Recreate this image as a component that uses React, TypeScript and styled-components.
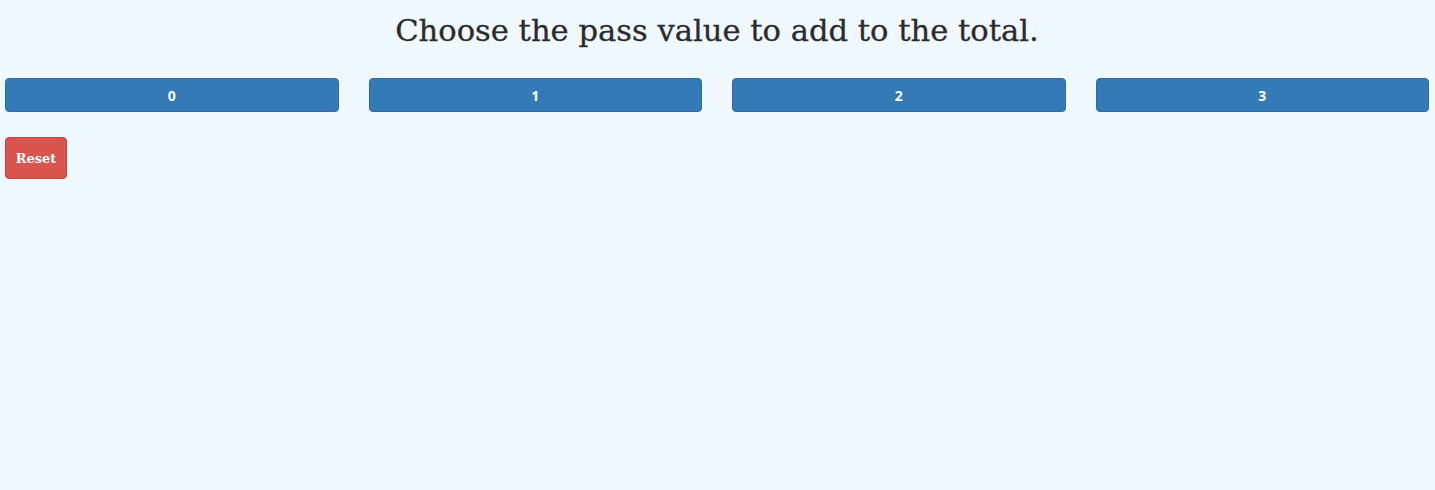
import React from 'react'
import styled, { createGlobalStyle } from 'styled-components'

const GlobalStyle = createGlobalStyle`
  html, body {
    margin: 0;
    background: #f0f8ff;
  }
`

const Page = styled.div`
  padding: 0 6px 0 5px;
`

const Title = styled.h2`
  margin: 0;
  padding-top: 13px;
  height: 78px;
  box-sizing: border-box;
  text-align: center;
  font-family: "DejaVu Serif", serif;
  font-size: 30.6px;
  font-weight: normal;
  color: #2b2b2b;
  -webkit-text-stroke: 0.3px #2b2b2b;
`

const Choices = styled.div`
  display: grid;
  grid-template-columns: repeat(4, 1fr);
  gap: 30px;
`

const Choice = styled.button`
  height: 34px;
  border: 1px solid #2e6da4;
  border-radius: 4px;
  background: #337ab7;
  color: #fff;
  font-family: "Open Sans", sans-serif;
  font-size: 14px;
  font-weight: bold;
  cursor: pointer;
`

const ResetButton = styled.button`
  margin-top: 25px;
  width: 62px;
  height: 42px;
  border: 1px solid #d43f3a;
  border-radius: 4px;
  background: #d9534f;
  color: #fff;
  font-family: "DejaVu Serif", serif;
  font-size: 13px;
  font-weight: bold;
  cursor: pointer;
`

const values = [0, 1, 2, 3]

const App = () => {
  return (
    <Page>
      <GlobalStyle />
      <Title>Choose the pass value to add to the total.</Title>
      <Choices>
        {values.map((v) => (
          <Choice key={v}>{v}</Choice>
        ))}
      </Choices>
      <ResetButton>Reset</ResetButton>
    </Page>
  )
}

export default App
